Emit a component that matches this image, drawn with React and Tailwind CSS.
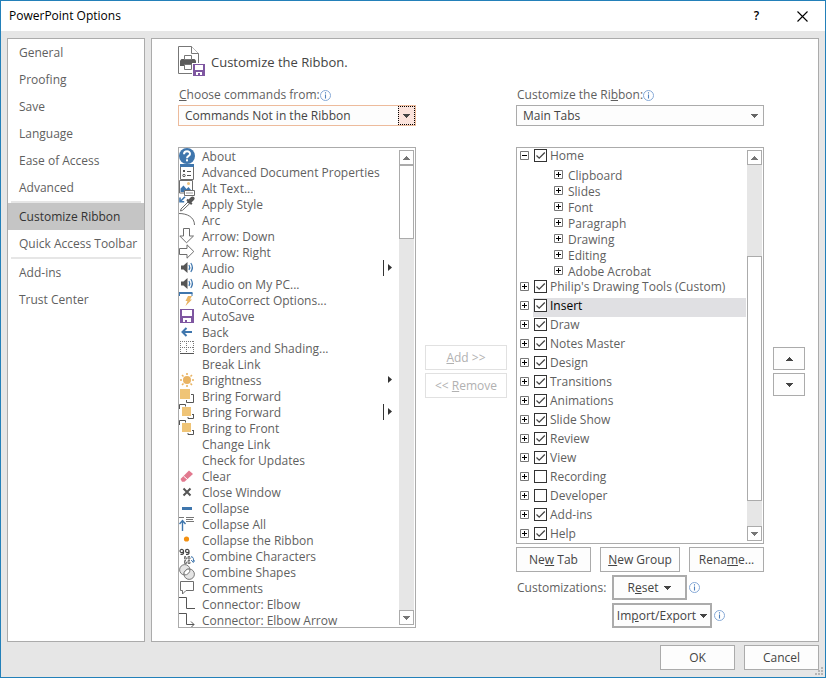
import React, { useState } from "react";

// ── Data ──

const NAV_GROUPS = [
  ["General", "Proofing", "Save", "Language", "Ease of Access", "Advanced"],
  ["Customize Ribbon", "Quick Access Toolbar"],
  ["Add-ins", "Trust Center"],
];

const COMMANDS = [
  { name: "About", icon: "about" },
  { name: "Advanced Document Properties", icon: "properties" },
  { name: "Alt Text...", icon: "altText" },
  { name: "Apply Style", icon: "eyedropper" },
  { name: "Arc", icon: "arc" },
  { name: "Arrow: Down", icon: "arrowDown" },
  { name: "Arrow: Right", icon: "arrowRight" },
  { name: "Audio", icon: "audio", menu: "split" },
  { name: "Audio on My PC...", icon: "audio" },
  { name: "AutoCorrect Options...", icon: "autoCorrect" },
  { name: "AutoSave", icon: "save" },
  { name: "Back", icon: "back" },
  { name: "Borders and Shading...", icon: "borders" },
  { name: "Break Link" },
  { name: "Brightness", icon: "sun", menu: "plain" },
  { name: "Bring Forward", icon: "forward" },
  { name: "Bring Forward", icon: "front", menu: "split" },
  { name: "Bring to Front", icon: "front" },
  { name: "Change Link" },
  { name: "Check for Updates" },
  { name: "Clear", icon: "eraser" },
  { name: "Close Window", icon: "close" },
  { name: "Collapse", icon: "minus" },
  { name: "Collapse All", icon: "collapseAll" },
  { name: "Collapse the Ribbon", icon: "dot" },
  { name: "Combine Characters", icon: "combine" },
  { name: "Combine Shapes", icon: "shapes" },
  { name: "Comments", icon: "comment" },
  { name: "Connector: Elbow", icon: "elbow" },
  { name: "Connector: Elbow Arrow", icon: "elbowArrow" },
];

const TABS = [
  {
    name: "Home",
    on: true,
    groups: ["Clipboard", "Slides", "Font", "Paragraph", "Drawing", "Editing", "Adobe Acrobat"],
  },
  { name: "Philip's Drawing Tools (Custom)", on: true },
  { name: "Insert", on: true },
  { name: "Draw", on: true },
  { name: "Notes Master", on: true },
  { name: "Design", on: true },
  { name: "Transitions", on: true },
  { name: "Animations", on: true },
  { name: "Slide Show", on: true },
  { name: "Review", on: true },
  { name: "View", on: true },
  { name: "Recording", on: false },
  { name: "Developer", on: false },
  { name: "Add-ins", on: true },
  { name: "Help", on: true },
];

// ── Command icons, all on a 16px grid ──

const ICONS = {
  about: (
    <>
      <circle cx="8" cy="8" r="8" fill="#3f76ad" />
      <path d="M5 6.2C5 2.4 11.2 2.4 11 6C11 8 8 7.8 8 10.2" fill="none" stroke="#fff" strokeWidth="2" />
      <rect x="7" y="11.3" width="2" height="2" fill="#fff" />
    </>
  ),
  properties: (
    <>
      <path d="M1.5 2.5H14.5V15.5H1.5Z" fill="#fff" stroke="#6d6d6d" />
      <rect x="1" y="0" width="14" height="3" fill="#3f76ad" />
      <rect x="4" y="6" width="2" height="2" fill="#555" />
      <path d="M8 7.5H12M8 11.5H12" stroke="#555" />
      <circle cx="5" cy="11.5" r="1.2" fill="none" stroke="#555" />
    </>
  ),
  altText: (
    <>
      <path d="M0.5 0.5H13.5V13H0.5Z" fill="#fff" stroke="#6d6d6d" />
      <path d="M1.5 12V8.5L4.5 5.5L7.5 9L9.5 7L12 10V12Z" fill="#3f76ad" />
      <circle cx="9.5" cy="3.5" r="1.5" fill="#ecc07a" />
      <path d="M5.5 10.5H15.5V15.5H5.5Z" fill="#fff" stroke="#6d6d6d" />
      <path d="M7 13H14" stroke="#999" />
    </>
  ),
  eyedropper: (
    <>
      <path d="M6 0.8L1.8 5M1 1.5V5.7H5.2" fill="none" stroke="#3f76ad" strokeWidth="1.6" />
      <path d="M9 6L2 13L1.5 15L3.5 14.3L10.8 7.5" fill="#fff" stroke="#6d6d6d" />
      <path d="M8 3.5L12.8 8.3" stroke="#555" strokeWidth="2" />
      <path d="M10.5 5.5L13.5 2.5" stroke="#555" strokeWidth="4" strokeLinecap="round" />
    </>
  ),
  arc: <path d="M0 1.5C8 1.5 15.5 5 15.5 13" fill="none" stroke="#6d6d6d" />,
  arrowDown: <path d="M4.5 0.5H10.5V8H14.5L7.5 14.8L0.8 8H4.5Z" fill="#fff" stroke="#6d6d6d" />,
  arrowRight: <path d="M0.5 4.5H8V0.8L14.8 7.5L8 14.2V10.5H0.5Z" fill="#fff" stroke="#6d6d6d" />,
  audio: (
    <>
      <path d="M2 5.5H4.5L8.5 2V13L4.5 9.5H2Z" fill="#555" />
      <path d="M10 5Q11.5 7.5 10 10" fill="none" stroke="#3f76ad" strokeWidth="1.2" />
      <path d="M11.8 3Q15 7.5 11.8 12" fill="none" stroke="#3f76ad" strokeWidth="1.2" />
    </>
  ),
  autoCorrect: (
    <>
      <path d="M0.5 4V1M13 1V4" fill="none" stroke="#3f76ad" />
      <path d="M0 1H13.5" stroke="#3f76ad" strokeWidth="2" />
      <path d="M9 4H13L11 7.5H13L6.5 14L8.5 9H6.5Z" fill="#e9b464" />
    </>
  ),
  save: (
    <>
      <path d="M1 1H15V15H1Z" fill="#7f57a1" />
      <path d="M3 2H13V8H3ZM4 10H12V14H4Z" fill="#fff" />
      <rect x="6" y="12" width="2" height="2" fill="#7f57a1" />
    </>
  ),
  back: <path d="M13 8H4M7.5 4L3.5 8L7.5 12" fill="none" stroke="#3f76ad" strokeWidth="2" />,
  borders: (
    <>
      <path d="M1.5 1V14M14.5 1V14M1 1.5H15M7.5 1V14M1 7.5H15" fill="none" stroke="#777" strokeDasharray="1 1" />
      <path d="M1 13.5H15" stroke="#555" />
    </>
  ),
  sun: (
    <>
      <circle cx="8" cy="8" r="4" fill="#e9b464" />
      <path
        d="M8 1V3M8 13V15M1 8H3M13 8H15M3 3L4.5 4.5M11.5 11.5L13 13M3 13L4.5 11.5M11.5 4.5L13 3"
        stroke="#e9b464"
        strokeWidth="1.6"
      />
    </>
  ),
  forward: (
    <>
      <rect x="1" y="1" width="10" height="10" fill="#efc477" />
      <path d="M12 6.5H14.5V14.5H7.5V12" fill="none" stroke="#555" />
    </>
  ),
  front: (
    <>
      <path d="M0.5 5V0.5H6.5V2.5M14.5 10V14.5H9V13M14.5 10.5H13" fill="none" stroke="#555" />
      <rect x="3" y="3" width="9" height="9" fill="#efc477" />
    </>
  ),
  eraser: (
    <>
      <path d="M1.5 11L10 2.5L14 6L5.5 13.8H3Z" fill="#e2798f" />
      <path d="M4.5 8L8.8 11.8" stroke="#fff" />
    </>
  ),
  close: <path d="M4.5 4.5L11.5 11.5M11.5 4.5L4.5 11.5" stroke="#555" strokeWidth="2" />,
  minus: <rect x="3" y="7" width="10" height="3" fill="#3f76ad" />,
  collapseAll: (
    <>
      <path d="M0 1.5H5M7 1.5H15M7 3.5H14M7 5.5H15" stroke="#777" />
      <path d="M3.5 15V4.5M0.5 8L3.5 4.5L6.5 8" fill="none" stroke="#3f76ad" strokeWidth="1.4" />
    </>
  ),
  dot: <circle cx="7.5" cy="7" r="2.6" fill="#f39011" />,
  combine: (
    <>
      <path
        d="M4.5 3A1.7 1.5 0 1 0 1 3A1.7 1.5 0 1 0 4.5 3V5Q4.5 6.5 1.5 6.3M10 3A1.7 1.5 0 1 0 6.5 3A1.7 1.5 0 1 0 10 3V5Q10 6.5 7 6.3"
        fill="none"
        stroke="#444"
        strokeWidth="1.2"
      />
      <path d="M7 8.5H5.5V11H7.5V9.8H5.5M11 8.5H9V11H11V9.8H9M7 12.5H5.5V15.5H7.5V14H5.5M11 12.5H9V15.5H11V14H9" fill="none" stroke="#777" />
      <path d="M11.8 9.5L13 8.5Q15 10 14.5 13.5M12.2 12L14.3 14.5L16 12.2" fill="none" stroke="#3f76ad" />
    </>
  ),
  shapes: (
    <>
      <circle cx="5.8" cy="5.8" r="5.2" fill="#e4e4e4" stroke="#777" />
      <circle cx="10.2" cy="10.2" r="5.2" fill="#e4e4e4" stroke="#777" />
      <path d="M10.9 5A5.2 5.2 0 0 1 5 10.9A5.2 5.2 0 0 1 10.9 5Z" fill="#fff" stroke="#777" />
    </>
  ),
  comment: <path d="M1.5 1.5H14.5V10.5H7L3.5 14V10.5H1.5Z" fill="#fff" stroke="#6d6d6d" />,
  elbow: <path d="M0 1.5H7.5V12.5H16" fill="none" stroke="#555" />,
  elbowArrow: <path d="M0 1.5H7.5V12.5H15M12 9.5L15 12.5L12 15.5" fill="none" stroke="#555" />,
};

function CommandIcon({ name }) {
  return (
    <svg className="w-4 h-4 shrink-0" viewBox="0 0 16 16" aria-hidden="true">
      {ICONS[name]}
    </svg>
  );
}

// ── Small shared glyphs ──

function InfoIcon() {
  return (
    <svg className="w-[11px] h-[11px] shrink-0" viewBox="0 0 11 11" aria-hidden="true">
      <circle cx="5.5" cy="5.5" r="5" fill="#fff" stroke="#86a9d6" />
      <path d="M5.5 2.3V3.6M5.5 4.6V8.6" stroke="#4f81bd" strokeWidth="1.1" />
    </svg>
  );
}

// Stepped edges keep the arrow solid at this size
function Triangle({ up }) {
  return (
    <svg className="w-[7px] h-1 shrink-0" viewBox="0 0 7 4" fill="currentColor" aria-hidden="true">
      <path
        d={
          up
            ? "M3 0H4V1H5V2H6V3H7V4H0V3H1V2H2V1H3Z"
            : "M0 0H7V1H6V2H5V3H4V4H3V3H2V2H1V1H0Z"
        }
      />
    </svg>
  );
}

function PageHeaderIcon() {
  return (
    <svg className="w-7 h-[31px] shrink-0" viewBox="0 0 28 31" aria-hidden="true">
      <path d="M0.5 0.5H13.5L20.5 7.5V27.5H0.5Z" fill="#fff" stroke="#777" />
      <path d="M13.5 0.5V7.5H20.5" fill="#fff" stroke="#777" />
      <path d="M3.5 13H16.5L18 14.5V20H2V14.5Z" fill="#5c5c5c" />
      <path d="M6.5 9.5H13.5V13.5H6.5ZM6.5 18.5H13.5V23.5H6.5Z" fill="#fff" stroke="#777" />
      <path d="M14 17H28V31H14Z" fill="#fff" />
      <path d="M15 18H27V30H15Z" fill="#7f57a1" />
      <path d="M17 19H25V24H17ZM18 26H24V29H18Z" fill="#fff" />
      <rect x="20" y="27" width="2" height="2" fill="#7f57a1" />
    </svg>
  );
}

// ── Controls ──

function Button({ children, className = "", ...rest }) {
  return (
    <button
      type="button"
      className={`flex items-center justify-center bg-[#fdfdfd] border-[#ababab] text-[#444] ${className}`}
      {...rest}
    >
      {children}
    </button>
  );
}

function Select({ id, value, highlighted }) {
  return (
    <div
      className={`grid h-[21px] border bg-[#fdfdfd] ${highlighted ? "border-[#edbb9c]" : "border-[#ababab]"}`}
    >
      <select
        id={id}
        defaultValue={value}
        className="col-start-1 row-start-1 appearance-none w-full px-1.5 text-[#444] outline-none"
      >
        <option>{value}</option>
      </select>
      <span
        className={`col-start-1 row-start-1 justify-self-end w-[17px] flex items-center justify-center pointer-events-none ${
          highlighted ? "bg-[#fbe3dc] border border-dotted border-black text-[#444]" : "text-[#666]"
        }`}
      >
        <Triangle />
      </span>
    </div>
  );
}

function ScrollBar({ children }) {
  return (
    <div className="w-[15px] shrink-0 my-0.5 mr-px flex flex-col bg-[#e6e6e6] text-[#777]">
      <button type="button" aria-label="Scroll up" className="h-[15px] flex items-center justify-center bg-white border border-[#ababab]">
        <Triangle up />
      </button>
      <div className="flex-1 flex flex-col">{children}</div>
      <button type="button" aria-label="Scroll down" className="h-[15px] flex items-center justify-center bg-white border border-[#ababab]">
        <Triangle />
      </button>
    </div>
  );
}

function Expander({ open, label }) {
  return (
    <button type="button" aria-label={label} className="mt-[3px] w-[9px] h-[9px] shrink-0">
      <svg className="block w-[9px] h-[9px]" viewBox="0 0 9 9" aria-hidden="true">
        <path d="M0.5 0.5H8.5V8.5H0.5Z" fill="#fff" stroke="#777" />
        <path d={open ? "M2 4.5H7" : "M2 4.5H7M4.5 2V7"} stroke="#000" />
      </svg>
    </button>
  );
}

function CheckBox({ checked, onChange }) {
  return (
    <span className="grid w-[13px] h-[13px] mt-px shrink-0">
      <input
        type="checkbox"
        checked={checked}
        onChange={onChange}
        className="col-start-1 row-start-1 appearance-none w-[13px] h-[13px] border border-[#333] bg-white"
      />
      {checked && (
        <svg className="col-start-1 row-start-1 w-[13px] h-[13px] pointer-events-none" viewBox="0 0 13 13" aria-hidden="true">
          <path d="M2.5 6.5L5.2 9.2L10.8 3.5" fill="none" stroke="#444" strokeWidth="1.3" />
        </svg>
      )}
    </span>
  );
}

// ── Sidebar ──

function Sidebar() {
  return (
    <nav className="w-[138px] shrink-0 bg-white border border-[#ababab]">
      {NAV_GROUPS.map((group, i) => (
        <div key={group[0]}>
          {i > 0 && <div className="mx-[3px] h-0.5 bg-[#e6e6e6]" />}
          {group.map((name) => (
            <a
              key={name}
              href="#"
              className={`flex items-center h-[27px] pl-[11px] whitespace-nowrap ${
                name === "Customize Ribbon" ? "bg-[#c5c5c5] text-[#333]" : ""
              }`}
            >
              {name}
            </a>
          ))}
        </div>
      ))}
    </nav>
  );
}

// ── Command list ──

function CommandList() {
  return (
    <div className="mt-[21px] h-[481px] flex border border-[#ababab] bg-white">
      <ul className="flex-1 min-w-0 overflow-hidden" role="listbox" aria-label="Commands">
        {COMMANDS.map((cmd, i) => (
          <li key={i} role="option" aria-selected="false" className="h-4 flex items-start gap-[7px]">
            <CommandIcon name={cmd.icon} />
            <span className="flex-1 leading-[18px] whitespace-nowrap">{cmd.name}</span>
            {cmd.menu && (
              <svg className="w-[10px] h-4 mr-1.5 shrink-0" viewBox="0 0 10 16" aria-hidden="true">
                {cmd.menu === "split" && <path d="M0.5 0V16" stroke="#333" />}
                <path d="M5 4V11L9 7.5Z" fill="#333" />
              </svg>
            )}
          </li>
        ))}
      </ul>
      <ScrollBar>
        <div className="h-[74px] bg-white border border-[#ababab]" />
      </ScrollBar>
    </div>
  );
}

// ── Tab tree ──

function TabTree() {
  const [enabled, setEnabled] = useState(() => TABS.map((t) => t.on));

  const toggle = (i) => setEnabled((prev) => prev.map((v, k) => (k === i ? !v : v)));

  return (
    <div className="mt-[21px] h-[397px] flex border border-[#ababab] bg-white">
      <ul className="flex-1 min-w-0 overflow-hidden pl-[3px]">
        {TABS.map((tab, i) => (
          <li key={tab.name}>
            <div className="h-[19px] flex items-start gap-1">
              <Expander open={!!tab.groups} label={"Expand " + tab.name} />
              <label
                className={`flex-1 h-[19px] mr-px pl-px flex items-start gap-[3px] whitespace-nowrap ${
                  tab.name === "Insert" ? "bg-[#e0e0e3] text-black" : ""
                }`}
              >
                <CheckBox checked={enabled[i]} onChange={() => toggle(i)} />
                {tab.name}
              </label>
            </div>
            {tab.groups && (
              <ul className="pl-[34px]">
                {tab.groups.map((group) => (
                  <li key={group} className="h-4 flex items-start gap-[5px] leading-[18px]">
                    <Expander label={"Expand " + group} />
                    {group}
                  </li>
                ))}
              </ul>
            )}
          </li>
        ))}
      </ul>
      <ScrollBar>
        <div className="flex-[92]" />
        <div className="flex-[244] bg-white border border-[#ababab]" />
        <div className="flex-[25]" />
      </ScrollBar>
    </div>
  );
}

// ── Main Component ──

export default function App() {
  return (
    <div className="min-h-screen flex flex-col bg-[#e6e6e6] border border-[#2380b9] font-['Open_Sans','Noto_Sans',sans-serif] text-[12px] leading-4 text-[#5f5f5f]">
      {/* Title bar */}
      <header className="h-[30px] shrink-0 flex items-center bg-white pl-2 text-black">
        <h1 className="flex-1">PowerPoint Options</h1>
        <button type="button" aria-label="Help" className="w-[45px] font-semibold">?</button>
        <button type="button" aria-label="Close" className="w-[46px] flex justify-center">
          <svg className="w-[11px] h-[11px]" viewBox="0 0 11 11" aria-hidden="true">
            <path d="M0.5 0.5L10.5 10.5M10.5 0.5L0.5 10.5" stroke="#000" strokeWidth="1.1" />
          </svg>
        </button>
      </header>

      <div className="flex-1 flex gap-1.5 px-1.5 pt-[7px]">
        <Sidebar />

        <main className="flex-1 min-w-0 bg-white border border-[#ababab] pl-[26px] pr-[13px] pt-[7px] pb-[13px]">
          <div className="flex items-center gap-[5px] mb-2.5">
            <PageHeaderIcon />
            <h2 className="text-[13px] text-[#444]">Customize the Ribbon.</h2>
          </div>

          <div className="grid grid-cols-[minmax(0,238fr)_82px_minmax(0,248fr)_32px] gap-x-[9px]">
            <section>
              <div className="flex items-center pl-px mb-0.5">
                <label htmlFor="commands"><u>C</u>hoose commands from:</label>
                <InfoIcon />
              </div>
              <Select id="commands" value="Commands Not in the Ribbon" highlighted />
              <CommandList />
            </section>

            <div className="pt-[258px] flex flex-col gap-[3px]">
              <button type="button" disabled className="h-[25px] border border-[#e1e1e1] text-[#b1b1b1]">
                <u>A</u>dd &gt;&gt;
              </button>
              <button type="button" disabled className="h-[25px] border border-[#e1e1e1] text-[#b1b1b1]">
                &lt;&lt; <u>R</u>emove
              </button>
            </div>

            <section>
              <div className="flex items-center pl-px mb-0.5">
                <label htmlFor="tabs">Customize the Ri<u>b</u>bon:</label>
                <InfoIcon />
              </div>
              <Select id="tabs" value="Main Tabs" />
              <TabTree />

              <div className="flex justify-between mt-[3px]">
                <Button className="w-[75px] h-[25px] border">Ne<u>w</u>&nbsp;Tab</Button>
                <Button className="w-[80px] h-[25px] border"><u>N</u>ew Group</Button>
                <Button className="w-[75px] h-[25px] border">Rena<u>m</u>e...</Button>
              </div>

              <div className="flex mt-[3px] pl-px">
                <span className="w-[95px] leading-[25px]">Customizations:</span>
                <div className="flex flex-col gap-[3px]">
                  <div className="flex items-center gap-0.5">
                    <Button className="w-[75px] h-[25px] border-2 gap-1.5">
                      <span>R<u>e</u>set</span>
                      <Triangle />
                    </Button>
                    <InfoIcon />
                  </div>
                  <div className="flex items-center gap-0.5">
                    <Button className="w-[100px] h-[25px] border-2 gap-1">
                      <span>Im<u>p</u>ort/Export</span>
                      <Triangle />
                    </Button>
                    <InfoIcon />
                  </div>
                </div>
              </div>
            </section>

            <div className="pt-[260px] flex flex-col gap-[3px]">
              <Button className="h-[23px] border" aria-label="Move up"><Triangle up /></Button>
              <Button className="h-[23px] border" aria-label="Move down"><Triangle /></Button>
            </div>
          </div>
        </main>
      </div>

      {/* Dialog buttons */}
      <footer className="relative flex justify-end gap-[9px] px-1.5 pt-[3px] pb-[7px]">
        <Button className="w-[75px] h-[25px] border">OK</Button>
        <Button className="w-[75px] h-[25px] border">Cancel</Button>
        <svg className="absolute right-0.5 bottom-0.5 w-2 h-2" viewBox="0 0 8 8" fill="#b5b5b5" aria-hidden="true">
          <path d="M6 0H8V2H6ZM3 3H5V5H3ZM6 3H8V5H6ZM0 6H2V8H0ZM3 6H5V8H3ZM6 6H8V8H6Z" />
        </svg>
      </footer>
    </div>
  );
}
